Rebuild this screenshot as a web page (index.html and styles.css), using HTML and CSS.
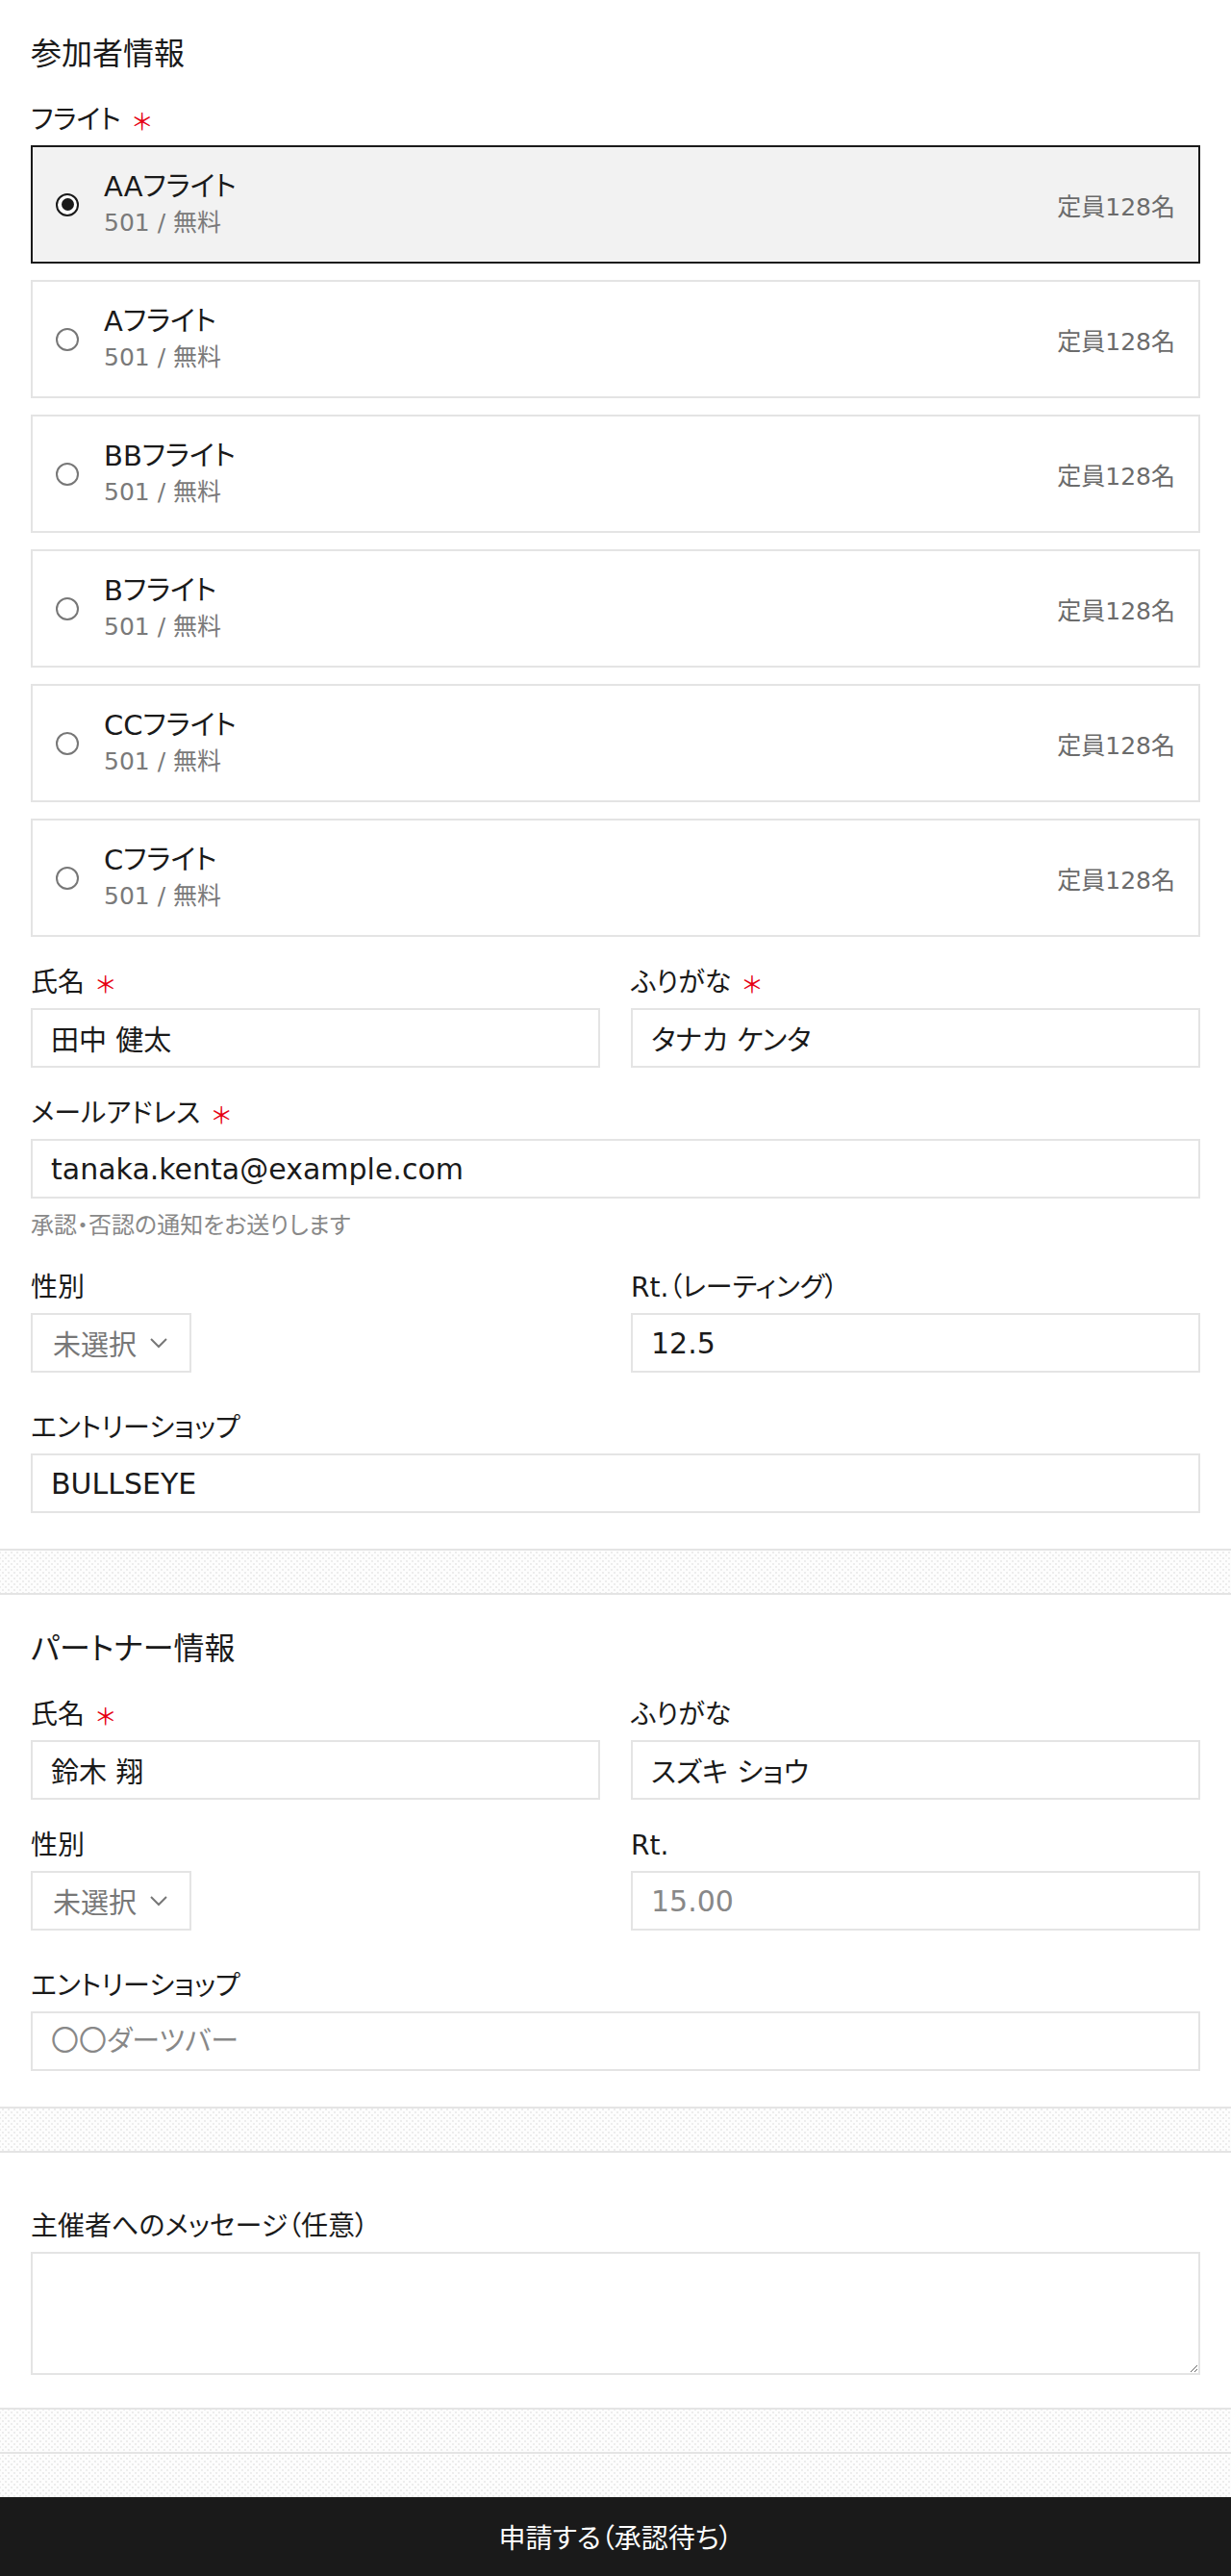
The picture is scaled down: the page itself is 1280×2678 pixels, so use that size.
FILE: index.html
```html
<!DOCTYPE html>
<html lang="ja">
<head>
<meta charset="utf-8">
<title>参加申請</title>
<link rel="stylesheet" href="styles.css">
</head>
<body>
<form class="entry-form">
  <section class="panel panel-first">
    <h2 class="panel-title">参加者情報</h2>
    <div class="field">
      <div class="label">フライト<span class="req">＊</span></div>
      <div class="flights">
        <label class="flight is-selected">
          <span class="radio"></span>
          <span class="flight-info"><span class="flight-name">AAフライト</span><span class="flight-meta">501 / 無料</span></span>
          <span class="flight-cap">定員128名</span>
        </label>
        <label class="flight">
          <span class="radio"></span>
          <span class="flight-info"><span class="flight-name">Aフライト</span><span class="flight-meta">501 / 無料</span></span>
          <span class="flight-cap">定員128名</span>
        </label>
        <label class="flight">
          <span class="radio"></span>
          <span class="flight-info"><span class="flight-name">BBフライト</span><span class="flight-meta">501 / 無料</span></span>
          <span class="flight-cap">定員128名</span>
        </label>
        <label class="flight">
          <span class="radio"></span>
          <span class="flight-info"><span class="flight-name">Bフライト</span><span class="flight-meta">501 / 無料</span></span>
          <span class="flight-cap">定員128名</span>
        </label>
        <label class="flight">
          <span class="radio"></span>
          <span class="flight-info"><span class="flight-name">CCフライト</span><span class="flight-meta">501 / 無料</span></span>
          <span class="flight-cap">定員128名</span>
        </label>
        <label class="flight">
          <span class="radio"></span>
          <span class="flight-info"><span class="flight-name">Cフライト</span><span class="flight-meta">501 / 無料</span></span>
          <span class="flight-cap">定員128名</span>
        </label>
      </div>
    </div>

    <div class="row">
      <div class="field">
        <div class="label">氏名<span class="req">＊</span></div>
        <input class="input" type="text" value="田中 健太">
      </div>
      <div class="field">
        <div class="label">ふりがな<span class="req">＊</span></div>
        <input class="input" type="text" value="タナカ ケンタ">
      </div>
    </div>

    <div class="field">
      <div class="label">メールアドレス<span class="req">＊</span></div>
      <input class="input input-latin" type="email" value="tanaka.kenta@example.com">
      <p class="help">承認・否認の通知をお送りします</p>
    </div>

    <div class="row row-select">
      <div class="field">
        <div class="label">性別</div>
        <div class="select">
          <span>未選択</span>
          <svg class="chev" width="20" height="12" viewBox="0 0 20 12"><polyline points="2,2 10,10 18,2" fill="none" stroke="#777" stroke-width="2"/></svg>
        </div>
      </div>
      <div class="field">
        <div class="label">Rt.（レーティング）</div>
        <input class="input input-latin" type="text" value="12.5">
      </div>
    </div>

    <div class="field">
      <div class="label">エントリーショップ</div>
      <input class="input input-latin" type="text" value="BULLSEYE">
    </div>
  </section>

  <section class="panel">
    <h2 class="panel-title">パートナー情報</h2>
    <div class="row">
      <div class="field">
        <div class="label">氏名<span class="req">＊</span></div>
        <input class="input" type="text" value="鈴木 翔">
      </div>
      <div class="field">
        <div class="label">ふりがな</div>
        <input class="input" type="text" value="スズキ ショウ">
      </div>
    </div>

    <div class="row row-select">
      <div class="field">
        <div class="label">性別</div>
        <div class="select">
          <span>未選択</span>
          <svg class="chev" width="20" height="12" viewBox="0 0 20 12"><polyline points="2,2 10,10 18,2" fill="none" stroke="#777" stroke-width="2"/></svg>
        </div>
      </div>
      <div class="field">
        <div class="label">Rt.</div>
        <input class="input input-latin" type="text" placeholder="15.00">
      </div>
    </div>

    <div class="field">
      <div class="label">エントリーショップ</div>
      <input class="input" type="text" placeholder="〇〇ダーツバー">
    </div>
  </section>

  <section class="panel panel-message">
    <div class="field">
      <div class="label">主催者へのメッセージ（任意）</div>
      <textarea class="textarea"></textarea>
    </div>
  </section>

  <div class="page-end"></div>

  <button type="button" class="submit">申請する（承認待ち）</button>
</form>
</body>
</html>
```

FILE: styles.css
```css
html, body {
  margin: 0;
  padding: 0;
}

body {
  font-family: "DejaVu Sans", "Noto Sans CJK JP", sans-serif;
  font-feature-settings: "palt";
  color: #1a1a1a;
  background-color: #fdfdfd;
  background-image:
    radial-gradient(circle, #ececec 0.7px, transparent 1.1px),
    radial-gradient(circle, #ececec 0.7px, transparent 1.1px);
  background-size: 6px 6px;
  background-position: 0 0, 3px 3px;
}

.entry-form {
  margin: 0;
}

.panel {
  background: #fff;
  padding: 32px 32px 37px;
  border-top: 2px solid #e4e4e4;
  border-bottom: 2px solid #e4e4e4;
  margin-bottom: 44px;
}

.panel-first {
  border-top: none;
}

.panel-message {
  padding-top: 56px;
  padding-bottom: 34px;
}

.panel-title {
  font-size: 32px;
  line-height: 48px;
  font-weight: 400;
  margin: 0 0 24px;
}

.label {
  display: flex;
  align-items: center;
  font-size: 28px;
  line-height: 42px;
  margin-bottom: 5px;
  white-space: nowrap;
}

.req {
  color: #e60012;
  font-family: "Noto Sans CJK JP", sans-serif;
  font-size: 24px;
  margin-left: 12px;
}

.field {
  margin-bottom: 27px;
}

.panel > .field:last-child,
.row:last-child .field {
  margin-bottom: 0;
}

.row {
  display: grid;
  grid-template-columns: 1fr 1fr;
  column-gap: 32px;
}

.row-select .field {
  margin-bottom: 37px;
}

/* flights */
.flights {
  display: flex;
  flex-direction: column;
  gap: 17px;
}

.flight {
  display: flex;
  align-items: center;
  height: 123px;
  box-sizing: border-box;
  border: 2px solid #e4e4e4;
  background: #fff;
  padding: 0 24px;
}

.flight.is-selected {
  border-color: #1a1a1a;
  background: #f2f2f2;
}

.radio {
  flex: none;
  width: 24px;
  height: 24px;
  box-sizing: border-box;
  border-radius: 50%;
  border: 2px solid #777;
  background: #fff;
  margin-right: 26px;
  display: flex;
  align-items: center;
  justify-content: center;
}

.is-selected .radio {
  border: 2.5px solid #1a1a1a;
}

.is-selected .radio::after {
  content: "";
  width: 13px;
  height: 13px;
  border-radius: 50%;
  background: #1a1a1a;
}

.flight-info {
  flex: 1;
  display: flex;
  flex-direction: column;
}

.flight-name {
  font-size: 29px;
  line-height: 38px;
}

.flight-meta {
  font-size: 25px;
  line-height: 37px;
  color: #7a7a7a;
}

.flight-cap {
  font-size: 25px;
  color: #6b6b6b;
}

/* inputs */
.input {
  display: block;
  width: 100%;
  height: 62px;
  box-sizing: border-box;
  border: 2px solid #e4e4e4;
  border-radius: 0;
  padding: 0 19px;
  margin: 0;
  font-family: inherit;
  font-feature-settings: "palt";
  font-size: 29px;
  color: #1a1a1a;
  background: #fff;
  outline: none;
}

.input-latin {
  font-size: 30px;
}

.input::placeholder {
  color: #888;
}

.help {
  margin: 12px 0 0;
  font-size: 24px;
  line-height: 33px;
  color: #888;
}

.select {
  display: inline-flex;
  align-items: center;
  gap: 13px;
  height: 62px;
  box-sizing: border-box;
  border: 2px solid #e4e4e4;
  background: #fff;
  padding: 0 22px 0 21px;
  font-size: 29px;
  color: #777;
}

.chev {
  display: block;
}

.textarea {
  display: block;
  width: 100%;
  height: 128px;
  box-sizing: border-box;
  border: 2px solid #e4e4e4;
  border-radius: 0;
  margin: 0;
  padding: 12px 19px;
  font-family: inherit;
  font-size: 29px;
  background: #fff;
  outline: none;
}

.page-end {
  border-top: 2px solid #e4e4e4;
  height: 130px;
}

.submit {
  position: fixed;
  left: 0;
  right: 0;
  bottom: 0;
  width: 100%;
  height: 82px;
  border: 0;
  margin: 0;
  background: #1a1a1a;
  color: #fff;
  font-family: "Noto Sans CJK JP", sans-serif;
  font-feature-settings: "palt";
  font-size: 28px;
  cursor: pointer;
}
```
